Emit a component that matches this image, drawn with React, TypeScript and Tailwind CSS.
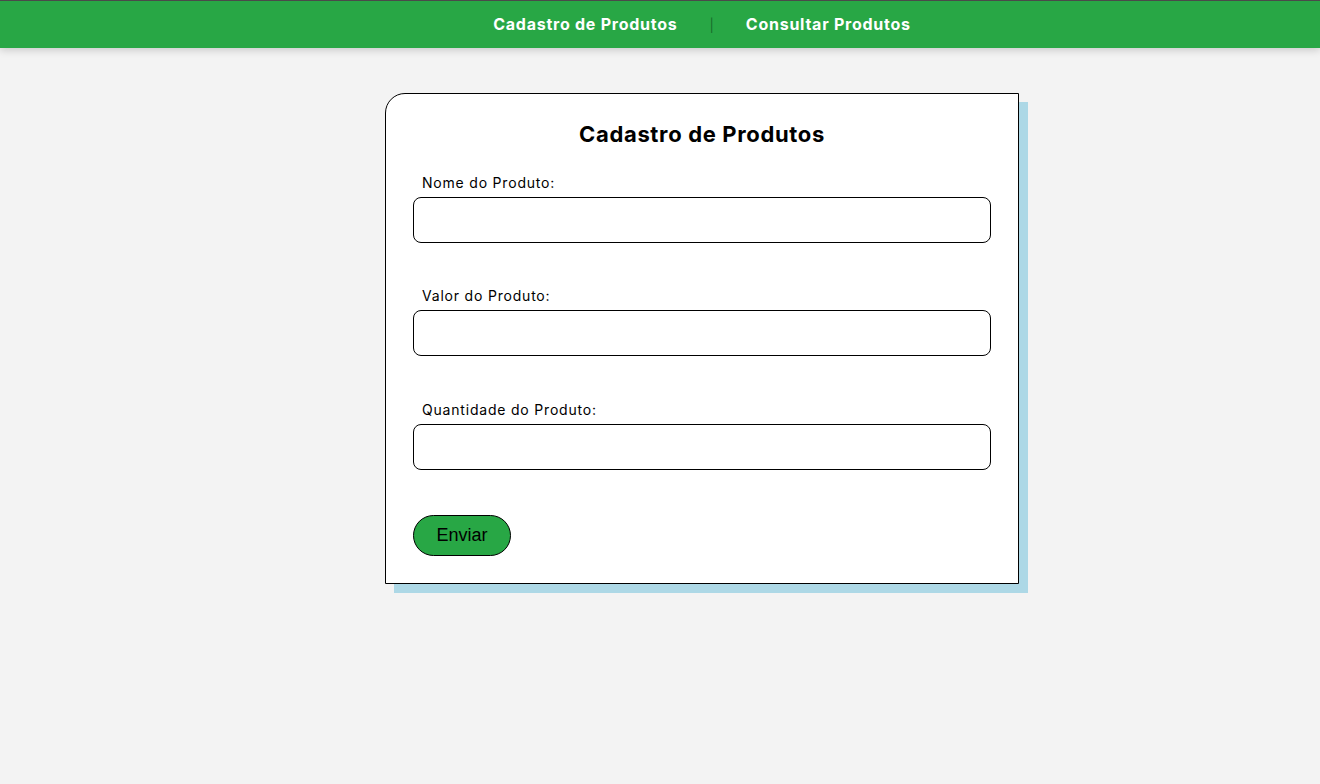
import React from "react";

const fields = [
  { id: "nome", label: "Nome do Produto:", gap: "mb-[43px]" },
  { id: "valor", label: "Valor do Produto:", gap: "mb-[44px]" },
  { id: "quantidade", label: "Quantidade do Produto:", gap: "mb-[45px]" },
];

const App: React.FC = () => {
  return (
    <div className="min-h-[784px] bg-[#f3f3f3] font-['Inter',sans-serif]">
      <header className="relative z-10 border-t border-[#4a4a4a] bg-[#28a745] shadow-[0_2px_8px_rgba(0,0,0,0.18)]">
        <nav className="flex h-[47px] items-center justify-center pb-[2px] pl-[84px] text-[16px] font-bold text-white">
          <a href="#" className="tracking-[0.75px]">Cadastro de Produtos</a>
          <span className="mx-[32px] mt-[4px] text-[13px] font-normal text-[#176b2b]">|</span>
          <a href="#" className="tracking-[0.75px]">Consultar Produtos</a>
        </nav>
      </header>

      <main className="flex justify-center pl-[84px] pt-[45px]">
        <form className="w-[634px] rounded-tl-[20px] border border-black bg-white px-[27px] pt-[26px] pb-[27px] shadow-[9px_9px_0_#add8e6]">
          <h1 className="text-center text-[22px] font-bold leading-[28px] tracking-[0.65px] text-black">
            Cadastro de Produtos
          </h1>
          <div className="mt-[25px]">
            {fields.map((field) => (
              <div key={field.id} className={field.gap}>
                <label htmlFor={field.id} className="block pl-[9px] text-[14px] leading-5 tracking-[0.8px] text-black">
                  {field.label}
                </label>
                <input
                  id={field.id}
                  type="text"
                  className="mt-[4px] block h-[46px] w-full rounded-[8px] border border-black bg-white px-3"
                />
              </div>
            ))}
          </div>
          <button
            type="button"
            className="h-[41px] w-[98px] rounded-full border border-black bg-[#28a745] text-[18px] text-black font-['Liberation_Sans',Arial,sans-serif]"
          >
            Enviar
          </button>
        </form>
      </main>
    </div>
  );
};

export default App;
